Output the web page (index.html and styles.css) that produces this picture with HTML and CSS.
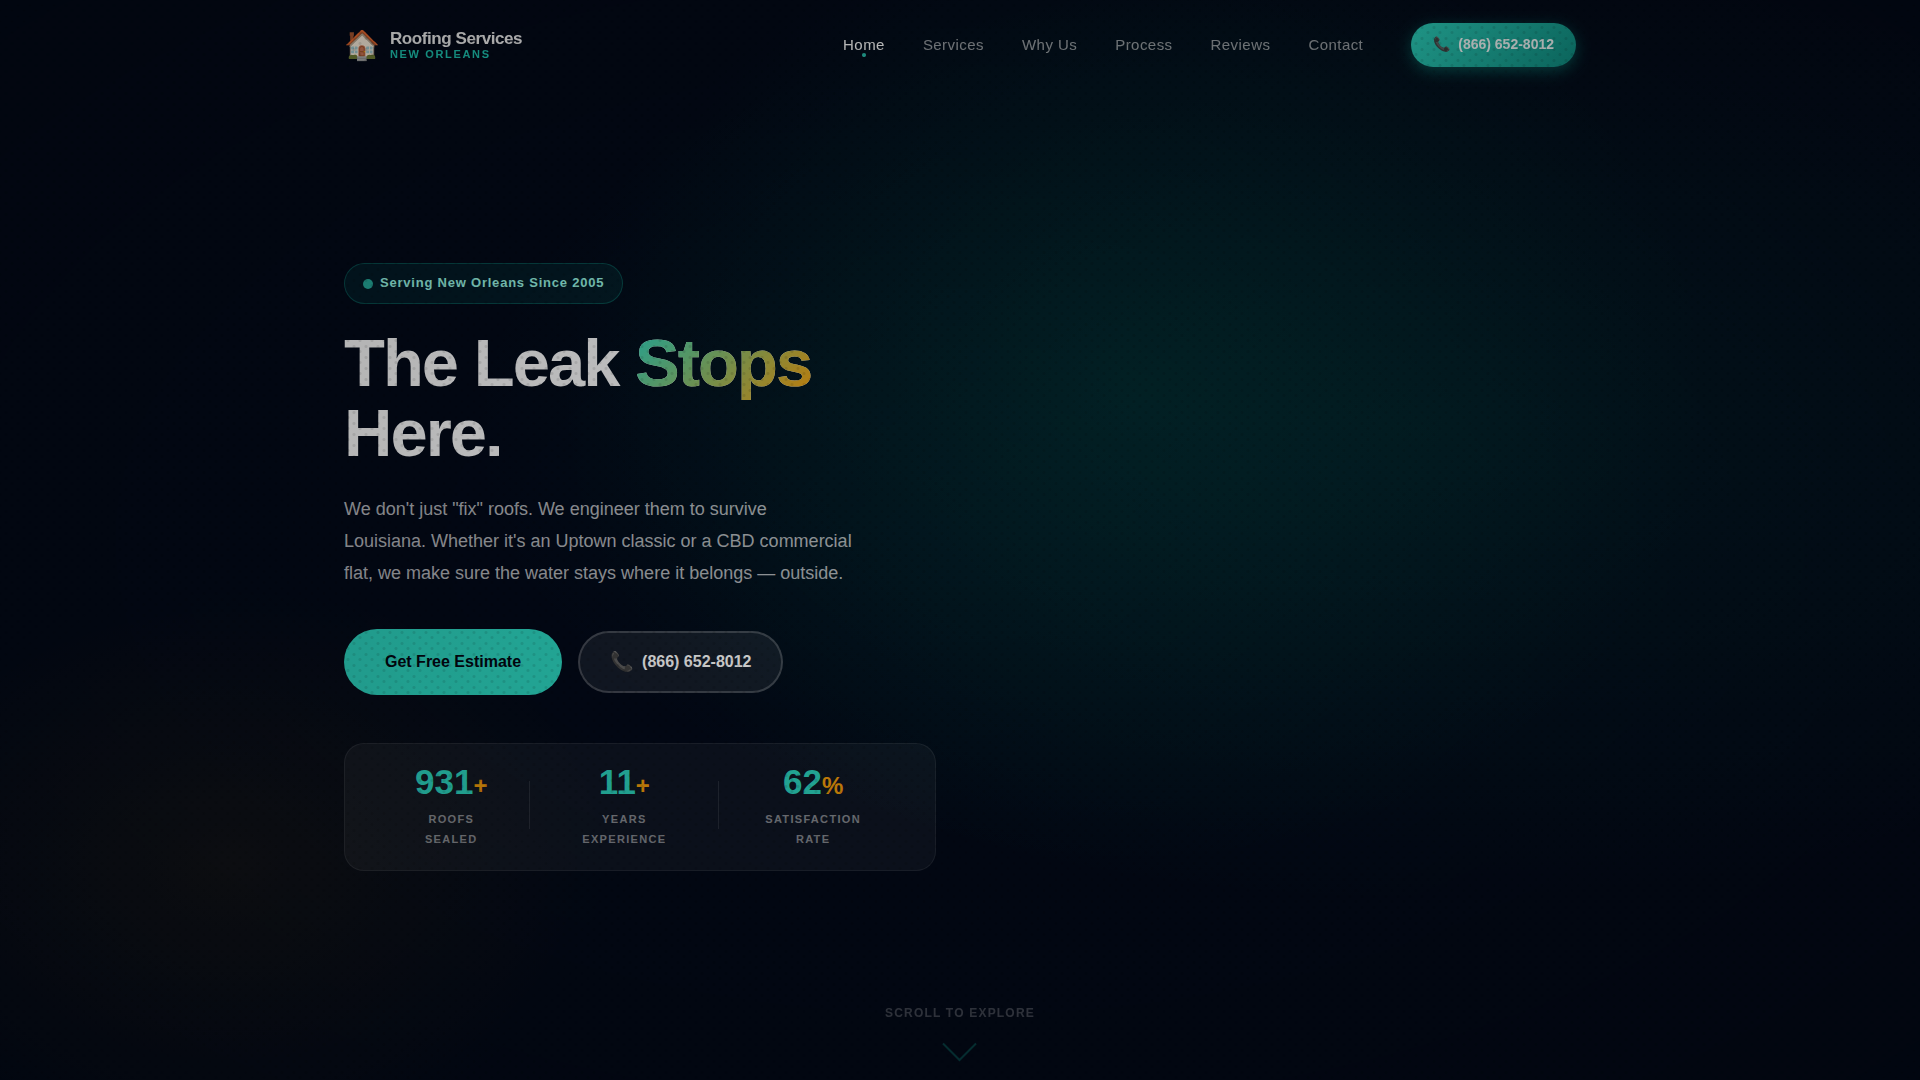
FILE: index.html
```
<!DOCTYPE html>
<html lang="en">
<head>
    <meta charset="UTF-8">
    <meta name="viewport" content="width=device-width, initial-scale=1.0">
    <title>Roofing Services New Orleans</title>
    <link rel="stylesheet" href="styles.css">
</head>
<body>
    <header class="navbar">
        <div class="container nav-inner">
            <a href="#home" class="logo">
                <span class="logo-icon">🏠</span>
                <span class="logo-text">
                    <span class="logo-name">Roofing Services</span>
                    <span class="logo-city">New Orleans</span>
                </span>
            </a>
            <nav class="nav-menu">
                <a href="#home" class="nav-link active">Home</a>
                <a href="#services" class="nav-link">Services</a>
                <a href="#why-us" class="nav-link">Why Us</a>
                <a href="#process" class="nav-link">Process</a>
                <a href="#reviews" class="nav-link">Reviews</a>
                <a href="#contact" class="nav-link">Contact</a>
                <a href="tel:+18666528012" class="nav-cta"><span>📞</span><span>(866) 652-8012</span></a>
            </nav>
        </div>
    </header>

    <section class="hero" id="home">
        <div class="container">
            <div class="hero-content">
                <div class="hero-badge"><span class="badge-dot"></span>Serving New Orleans Since 2005</div>
                <h1>The Leak <span class="gradient-text">Stops</span><br>Here.</h1>
                <p class="hero-text">We don't just "fix" roofs. We engineer them to survive<br>Louisiana. Whether it's an Uptown classic or a CBD commercial<br>flat, we make sure the water stays where it belongs — outside.</p>
                <div class="hero-buttons">
                    <a href="#contact" class="btn btn-primary">Get Free Estimate</a>
                    <a href="tel:+18666528012" class="btn btn-glass"><span class="btn-icon">📞</span>(866) 652-8012</a>
                </div>
                <div class="hero-stats">
                    <div class="stat">
                        <div class="stat-value">931<span>+</span></div>
                        <div class="stat-label">Roofs Sealed</div>
                    </div>
                    <div class="stat-divider"></div>
                    <div class="stat">
                        <div class="stat-value">11<span>+</span></div>
                        <div class="stat-label">Years Experience</div>
                    </div>
                    <div class="stat-divider"></div>
                    <div class="stat">
                        <div class="stat-value">62<span>%</span></div>
                        <div class="stat-label">Satisfaction Rate</div>
                    </div>
                </div>
            </div>
        </div>
        <a href="#services" class="scroll-hint">
            <span>Scroll to Explore</span>
            <svg width="36" height="20" viewBox="0 0 36 20" fill="none"><path d="M1 1.5 L17.5 18 L34 1.5" stroke="#14b8a6" stroke-width="2"/></svg>
        </a>
    </section>

    <div class="overlay"></div>
</body>
</html>
```
FILE: styles.css
```
* {
    margin: 0;
    padding: 0;
    box-sizing: border-box;
}

body {
    font-family: "Liberation Sans", Arial, sans-serif;
    background-color: #030a19;
    color: #fff;
    line-height: 1.7;
    overflow-x: hidden;
}

a {
    color: inherit;
    text-decoration: none;
}

.container {
    width: 100%;
    max-width: 1280px;
    margin: 0 auto;
    padding: 0 24px;
}

/* texture + vignette over the whole page */
.overlay {
    position: fixed;
    inset: 0;
    z-index: 100;
    pointer-events: none;
    background:
        radial-gradient(circle, rgba(0, 0, 0, 0.1) 1px, transparent 2px) 0 0 / 12px 11px,
        radial-gradient(circle, rgba(0, 0, 0, 0.1) 1px, transparent 2px) 6px 5px / 12px 11px,
        radial-gradient(ellipse at center, rgba(0, 0, 0, 0.18) 0%, rgba(0, 0, 0, 0.34) 100%);
}

/* Navbar */
.navbar {
    position: fixed;
    top: 0;
    left: 0;
    right: 0;
    z-index: 10;
    padding: 23px 0;
}

.nav-inner {
    display: flex;
    align-items: center;
    justify-content: space-between;
}

.logo {
    display: flex;
    align-items: center;
    gap: 10px;
}

.logo-icon {
    font-size: 29px;
    line-height: 36px;
}

.logo-text {
    display: flex;
    flex-direction: column;
}

.logo-name {
    font-size: 17px;
    font-weight: 700;
    line-height: 18px;
    letter-spacing: -0.025em;
    color: rgba(255, 255, 255, 0.95);
}

.logo-city {
    font-size: 11px;
    font-weight: 700;
    line-height: 12px;
    letter-spacing: 0.15em;
    text-transform: uppercase;
    color: #1ec8b4;
}

.nav-menu {
    display: flex;
    align-items: center;
    gap: 38px;
}

.nav-link {
    position: relative;
    font-size: 15px;
    letter-spacing: 0.03em;
    color: rgba(255, 255, 255, 0.6);
}

.nav-link.active {
    color: #fff;
}

.nav-link.active::after {
    content: "";
    position: absolute;
    left: 50%;
    bottom: 1px;
    width: 4px;
    height: 4px;
    margin-left: -2px;
    border-radius: 50%;
    background: #2dd4bf;
}

.nav-cta {
    display: flex;
    align-items: center;
    gap: 8px;
    height: 44px;
    margin-left: 10px;
    padding: 0 22px;
    border-radius: 50px;
    font-size: 14px;
    font-weight: 700;
    color: rgba(255, 255, 255, 0.95);
    background: linear-gradient(135deg, #2dd4bf, #0f8f83);
    box-shadow: 0 4px 15px rgba(20, 184, 166, 0.4);
}

/* Hero */
.hero {
    position: relative;
    display: flex;
    align-items: center;
    min-height: 100vh;
    padding: 120px 0 66px;
    background:
        radial-gradient(ellipse 30% 44% at 59% 36%, rgba(0, 190, 145, 0.12), transparent),
        radial-gradient(ellipse 50% 44% at 74% 40%, rgba(0, 184, 150, 0.09), transparent),
        radial-gradient(ellipse 20% 26% at 12% 80%, rgba(245, 170, 11, 0.06), transparent);
}

.hero-content {
    max-width: 592px;
}

.hero-badge {
    display: inline-flex;
    align-items: center;
    gap: 7px;
    height: 41px;
    padding: 0 18px;
    border: 1px solid rgba(20, 184, 166, 0.3);
    border-radius: 50px;
    background: rgba(20, 184, 166, 0.1);
    color: #99f6e4;
    font-size: 13px;
    font-weight: 700;
    letter-spacing: 0.06em;
    margin-bottom: 24px;
}

.badge-dot {
    width: 10px;
    height: 10px;
    border-radius: 50%;
    background: #26ab9c;
}

h1 {
    font-size: 67px;
    line-height: 70px;
    letter-spacing: -2px;
    margin-bottom: 25px;
    background: linear-gradient(135deg, #f6f6f6, #f3f4f6);
    -webkit-background-clip: text;
    background-clip: text;
    color: transparent;
}

.gradient-text {
    background: linear-gradient(135deg, #2dd4bf, #f59e0b);
    -webkit-background-clip: text;
    background-clip: text;
}

.hero-text {
    font-size: 18px;
    line-height: 32px;
    color: rgba(255, 255, 255, 0.7);
    margin-bottom: 40px;
}

.hero-buttons {
    display: flex;
    align-items: center;
    gap: 16px;
    margin-bottom: 48px;
}

.btn {
    display: flex;
    align-items: center;
    justify-content: center;
    border-radius: 50px;
    font-size: 16px;
    font-weight: 700;
}

.btn-primary {
    height: 66px;
    padding: 0 41px;
    color: #030712;
    background: linear-gradient(135deg, #2dd0bc, #2dd8c2);
}

.btn-glass {
    gap: 8px;
    height: 62px;
    padding: 0 30px;
    border: 2px solid rgba(255, 255, 255, 0.2);
    background: rgba(255, 255, 255, 0.08);
}

.btn-icon {
    font-size: 19px;
}

.hero-stats {
    display: grid;
    grid-template-columns: 5fr 1px 6fr 1px 6fr;
    align-items: center;
    padding: 16px 28px 21px;
    border: 1px solid rgba(255, 255, 255, 0.08);
    border-radius: 20px;
    background: rgba(255, 255, 255, 0.05);
}

.stat {
    text-align: center;
}

.stat-value {
    font-size: 35px;
    font-weight: 700;
    line-height: 44px;
    color: #2dd4bf;
}

.stat-value span {
    font-size: 24px;
    line-height: 1;
    color: #f59e0b;
}

.stat-label {
    max-width: 100px;
    margin: 5px auto 0;
    font-size: 11px;
    font-weight: 700;
    line-height: 20px;
    letter-spacing: 0.12em;
    text-transform: uppercase;
    color: rgba(255, 255, 255, 0.5);
}

.stat-divider {
    height: 48px;
    background: rgba(255, 255, 255, 0.1);
}

.scroll-hint {
    position: absolute;
    left: 0;
    right: 0;
    bottom: 18px;
    display: flex;
    flex-direction: column;
    align-items: center;
    gap: 19px;
    font-size: 12px;
    font-weight: 700;
    letter-spacing: 0.1em;
    text-transform: uppercase;
    color: rgba(255, 255, 255, 0.8);
    opacity: 0.3;
}
```
